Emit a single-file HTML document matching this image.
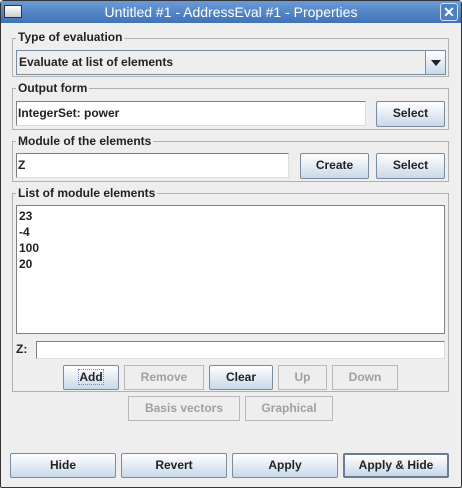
<!DOCTYPE html><html><head><style>
*{box-sizing:border-box}
body{margin:0;width:462px;height:488px;background:#eeeeee;font-family:"Liberation Sans",sans-serif;font-size:12px;font-weight:bold;color:#222;position:relative;overflow:hidden}
.a{position:absolute}
.win{left:0;top:0;width:462px;height:488px;border:1px solid #333;border-radius:4px 4px 2px 2px}
.title{left:1px;top:1px;width:460px;height:22px;background:linear-gradient(#6b9ad6,#3f73b8);color:#fff;font-weight:normal;font-size:14px;text-align:center;line-height:23px}
.grp{border:1px solid #b0b0b0}
.lbl{background:#eee;padding:0 2px;line-height:14px;font-size:12px}
.fld{background:#fff;border:1px solid #808080;border-right-color:#ddd;border-bottom-color:#ddd;padding-left:1px;line-height:22px}
.btn{border:1px solid #7a8ca0;background:linear-gradient(#fff,#c8d8ea);text-align:center;line-height:22px;border-radius:2px}
.dis{border:1px solid #b8b8b8;background:#eee;color:#a0a0a0;text-align:center;line-height:22px}
</style></head><body>
<div class="a win"></div>
<div class="a title">Untitled #1 - AddressEval #1 - Properties</div>
<div class="a" style="left:4px;top:5px;width:18px;height:13px;border:1px solid #333;background:linear-gradient(#fff,#ccc)"></div>
<div class="a" style="left:440px;top:3px;width:18px;height:18px;border:1px solid #dde;border-radius:3px;background:#4a80c4;color:#fff;text-align:center;line-height:17px;font-size:14px">✕</div>

<div class="a grp" style="left:12px;top:38px;width:437px;height:39px"></div>
<div class="a lbl" style="left:16px;top:30px">Type of evaluation</div>
<div class="a" style="left:16px;top:50px;width:430px;height:25px;border:1px solid #7a8ca0;background:#eee;padding-left:2px;line-height:23px">Evaluate at list of elements</div>
<div class="a btn" style="left:425px;top:50px;width:21px;height:25px;border-radius:0"></div>
<div class="a" style="left:431px;top:60px;width:0;height:0;border-left:5px solid transparent;border-right:5px solid transparent;border-top:6px solid #222"></div>

<div class="a grp" style="left:12px;top:88px;width:437px;height:42px"></div>
<div class="a lbl" style="left:16px;top:81px">Output form</div>
<div class="a fld" style="left:16px;top:101px;width:350px;height:25px">IntegerSet: power</div>
<div class="a btn" style="left:376px;top:101px;width:69px;height:26px">Select</div>

<div class="a grp" style="left:12px;top:141px;width:437px;height:41px"></div>
<div class="a lbl" style="left:16px;top:134px">Module of the elements</div>
<div class="a fld" style="left:16px;top:153px;width:273px;height:25px">Z</div>
<div class="a btn" style="left:300px;top:153px;width:69px;height:26px">Create</div>
<div class="a btn" style="left:376px;top:153px;width:69px;height:26px">Select</div>

<div class="a grp" style="left:12px;top:193px;width:437px;height:199px"></div>
<div class="a lbl" style="left:16px;top:186px">List of module elements</div>
<div class="a" style="left:16px;top:205px;width:429px;height:129px;background:#fff;border:1px solid #808080;padding:2px;line-height:16px">23<br>-4<br>100<br>20</div>
<div class="a" style="left:16px;top:342px">Z:</div>
<div class="a fld" style="left:36px;top:341px;width:409px;height:18px"></div>
<div class="a btn" style="left:63px;top:365px;width:56px;height:25px"><span style="border:1px dotted #88a">Add</span></div>
<div class="a dis" style="left:124px;top:365px;width:80px;height:25px">Remove</div>
<div class="a btn" style="left:209px;top:365px;width:64px;height:25px">Clear</div>
<div class="a dis" style="left:278px;top:365px;width:49px;height:25px">Up</div>
<div class="a dis" style="left:332px;top:365px;width:66px;height:25px">Down</div>
<div class="a dis" style="left:128px;top:396px;width:112px;height:25px">Basis vectors</div>
<div class="a dis" style="left:245px;top:396px;width:88px;height:25px">Graphical</div>

<div class="a btn" style="left:10px;top:453px;width:106px;height:25px">Hide</div>
<div class="a btn" style="left:121px;top:453px;width:106px;height:25px">Revert</div>
<div class="a btn" style="left:232px;top:453px;width:106px;height:25px">Apply</div>
<div class="a btn" style="left:343px;top:453px;width:106px;height:25px;border:2px solid #6a7c90;line-height:21px">Apply &amp; Hide</div>
</body></html>
